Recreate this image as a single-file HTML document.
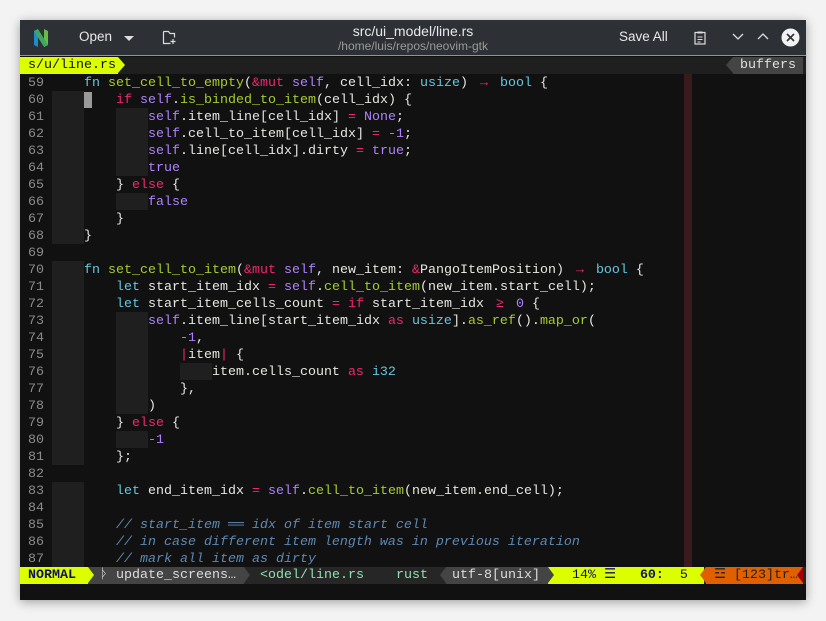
<!DOCTYPE html>
<html><head><meta charset="utf-8"><style>
*{margin:0;padding:0;box-sizing:border-box}
body{width:826px;height:621px;background:#f3f3f3;position:relative;overflow:hidden;font-family:"Liberation Sans","DejaVu Sans",sans-serif}
#win{position:absolute;left:20px;top:20px;width:786px;height:580px;background:#111;box-shadow:0 2px 10px rgba(0,0,0,.35)}
#tb{position:absolute;left:0;top:0;width:786px;height:36px;background:#2d3035;border-bottom:1px solid #3daee9;color:#e8e8e8;font-size:13.5px}
.abs{position:absolute;white-space:pre}
.m{font-family:"Liberation Mono","DejaVu Sans Mono",monospace;font-size:13.33px;line-height:17px}
.ln{position:absolute;left:32px;height:17px;color:#e6e6e2;white-space:pre;padding-top:1px}
.num{position:absolute;left:8px;width:16px;text-align:right;color:#8b8b8b;height:17px;padding-top:1px}
.k{color:#67c5dc}.f{color:#a6cc2c}.p{color:#f0286e}.s{color:#ae81ff}.c{color:#5f88b3;font-style:italic}
.lig{display:inline-block;width:16px;text-align:center}
.g{position:absolute;background:#1f1f1f;height:17px}
</style></head><body>
<div id="win">
<div id="tb">
 <svg class="abs" style="left:13px;top:8px" width="16" height="20" viewBox="0 0 16 20"><path d="M1 3 L5 1 L5 19 L1 17Z" fill="#1d8cc9"/><path d="M11 1 L15 3 L15 17 L11 19Z" fill="#6ab94a"/><path d="M5 1 L15 17 L11 19 L1 3Z" fill="#3fa860"/></svg>
 <div class="abs" style="left:59px;top:9px">Open</div>
 <div class="abs" style="left:104px;top:16px;width:0;height:0;border-left:5px solid transparent;border-right:5px solid transparent;border-top:5px solid #ddd"></div>
 <svg class="abs" style="left:142px;top:10px" width="14" height="15" viewBox="0 0 14 15"><path d="M1.5 1.5h5l1.5 2h4.5v4M1.5 1.5v12h7" fill="none" stroke="#ddd" stroke-width="1.2"/><path d="M11 9v5M8.5 11.5h5" stroke="#ddd" stroke-width="1.2"/></svg>
 <div class="abs" style="left:0;width:786px;text-align:center;top:3px;font-size:14px">src/ui_model/line.rs</div>
 <div class="abs" style="left:0;width:786px;text-align:center;top:19px;font-size:12px;color:#9a9a9a">/home/luis/repos/neovim-gtk</div>
 <div class="abs" style="left:599px;top:9px">Save All</div>
 <svg class="abs" style="left:674px;top:11px" width="12" height="14" viewBox="0 0 12 14"><rect x="1" y="1.5" width="10" height="11.5" fill="none" stroke="#ddd" stroke-width="1.2"/><rect x="3.5" y="0.5" width="5" height="2" fill="#ddd"/><path d="M3.5 6h5M3.5 8.5h5M3.5 11h3" stroke="#ddd"/></svg>
 <svg class="abs" style="left:712px;top:13px" width="12" height="8"><path d="M1 1l5 5 5-5" fill="none" stroke="#ddd" stroke-width="1.3"/></svg>
 <svg class="abs" style="left:737px;top:12px" width="12" height="8"><path d="M1 7l5-5 5 5" fill="none" stroke="#ddd" stroke-width="1.3"/></svg>
 <svg class="abs" style="left:761px;top:8px" width="19" height="19"><circle cx="9.5" cy="9.5" r="9" fill="#f2f2f2"/><path d="M6 6l7 7M13 6l-7 7" stroke="#2d3035" stroke-width="1.6"/></svg>
</div>
<div class="abs" style="left:0;top:37px;width:786px;height:17px;background:#1f1f1f"></div>
<div class="abs m" style="left:0;top:37px;width:98px;height:17px;background:#dcff00;color:#111;padding-left:8px">s/u/line.rs</div>
<div class="abs" style="left:98px;top:37px;width:0;height:0;border-top:8.5px solid transparent;border-bottom:8.5px solid transparent;border-left:7px solid #dcff00"></div>
<div class="abs" style="left:706px;top:37px;width:0;height:0;border-top:8.5px solid transparent;border-bottom:8.5px solid transparent;border-right:7px solid #444"></div>
<div class="abs m" style="left:713px;top:37px;width:70px;height:17px;background:#444;color:#e0e0e0;padding-left:7px">buffers</div>
<div class="abs" style="left:664px;top:54px;width:8px;height:493px;background:#3a1a1c"></div>
<div class="m" style="position:absolute;left:0;top:54px;width:786px;height:493px">
<div class="g" style="left:32px;top:17px;height:153px;width:32px"></div>
<div class="g" style="left:96px;top:34px;height:68px;width:32px"></div>
<div class="g" style="left:96px;top:119px;width:32px"></div>
<div class="g" style="left:32px;top:187px;height:204px;width:32px"></div>
<div class="g" style="left:96px;top:238px;height:102px;width:32px"></div>
<div class="g" style="left:96px;top:357px;width:32px"></div>
<div class="g" style="left:160px;top:289px;width:32px"></div>
<div class="g" style="left:32px;top:408px;height:85px;width:32px"></div>
<div class="abs" style="left:64px;top:18px;width:8px;height:16px;background:#9a9a9a"></div>
<div class="num" style="top:0">59</div><div class="ln" style="top:0">    <span class="k">fn</span> <span class="f">set_cell_to_empty</span>(<span class="p">&amp;mut</span> <span class="s">self</span>, cell_idx: <span class="k">usize</span>) <span class="p lig">→</span> <span class="k">bool</span> {</div>
<div class="num" style="top:17px">60</div><div class="ln" style="top:17px">        <span class="p">if</span> <span class="s">self</span>.<span class="f">is_binded_to_item</span>(cell_idx) {</div>
<div class="num" style="top:34px">61</div><div class="ln" style="top:34px">            <span class="s">self</span>.item_line[cell_idx] <span class="p">=</span> <span class="s">None</span>;</div>
<div class="num" style="top:51px">62</div><div class="ln" style="top:51px">            <span class="s">self</span>.cell_to_item[cell_idx] <span class="p">=</span> <span class="s">-1</span>;</div>
<div class="num" style="top:68px">63</div><div class="ln" style="top:68px">            <span class="s">self</span>.line[cell_idx].dirty <span class="p">=</span> <span class="s">true</span>;</div>
<div class="num" style="top:85px">64</div><div class="ln" style="top:85px">            <span class="s">true</span></div>
<div class="num" style="top:102px">65</div><div class="ln" style="top:102px">        } <span class="p">else</span> {</div>
<div class="num" style="top:119px">66</div><div class="ln" style="top:119px">            <span class="s">false</span></div>
<div class="num" style="top:136px">67</div><div class="ln" style="top:136px">        }</div>
<div class="num" style="top:153px">68</div><div class="ln" style="top:153px">    }</div>
<div class="num" style="top:170px">69</div>
<div class="num" style="top:187px">70</div><div class="ln" style="top:187px">    <span class="k">fn</span> <span class="f">set_cell_to_item</span>(<span class="p">&amp;mut</span> <span class="s">self</span>, new_item: <span class="p">&amp;</span>PangoItemPosition) <span class="p lig">→</span> <span class="k">bool</span> {</div>
<div class="num" style="top:204px">71</div><div class="ln" style="top:204px">        <span class="k">let</span> start_item_idx <span class="p">=</span> <span class="s">self</span>.<span class="f">cell_to_item</span>(new_item.start_cell);</div>
<div class="num" style="top:221px">72</div><div class="ln" style="top:221px">        <span class="k">let</span> start_item_cells_count <span class="p">=</span> <span class="p">if</span> start_item_idx <span class="p lig">≥</span> <span class="s">0</span> {</div>
<div class="num" style="top:238px">73</div><div class="ln" style="top:238px">            <span class="s">self</span>.item_line[start_item_idx <span class="p">as</span> <span class="k">usize</span>].<span class="f">as_ref</span>().<span class="f">map_or</span>(</div>
<div class="num" style="top:255px">74</div><div class="ln" style="top:255px">                <span class="s">-1</span>,</div>
<div class="num" style="top:272px">75</div><div class="ln" style="top:272px">                <span class="p">|</span>item<span class="p">|</span> {</div>
<div class="num" style="top:289px">76</div><div class="ln" style="top:289px">                    item.cells_count <span class="p">as</span> <span class="k">i32</span></div>
<div class="num" style="top:306px">77</div><div class="ln" style="top:306px">                },</div>
<div class="num" style="top:323px">78</div><div class="ln" style="top:323px">            )</div>
<div class="num" style="top:340px">79</div><div class="ln" style="top:340px">        } <span class="p">else</span> {</div>
<div class="num" style="top:357px">80</div><div class="ln" style="top:357px">            <span class="s">-1</span></div>
<div class="num" style="top:374px">81</div><div class="ln" style="top:374px">        };</div>
<div class="num" style="top:391px">82</div>
<div class="num" style="top:408px">83</div><div class="ln" style="top:408px">        <span class="k">let</span> end_item_idx <span class="p">=</span> <span class="s">self</span>.<span class="f">cell_to_item</span>(new_item.end_cell);</div>
<div class="num" style="top:425px">84</div>
<div class="num" style="top:442px">85</div><div class="ln c" style="top:442px">        // start_item <span class="lig">══</span> idx of item start cell</div>
<div class="num" style="top:459px">86</div><div class="ln c" style="top:459px">        // in case different item length was in previous iteration</div>
<div class="num" style="top:476px">87</div><div class="ln c" style="top:476px">        // mark all item as dirty</div>
</div>
<div class="m" style="position:absolute;left:0;top:547px;width:786px;height:17px;background:#262626">
 <div class="abs" style="left:0;top:0;width:68px;height:17px;background:#dcff00;color:#10106a;font-weight:bold;padding-left:8px">NORMAL</div>
 <div class="abs" style="left:68px;top:0;width:156px;height:17px;background:#444;color:#ddd;padding-left:12px">ᚦ update_screens…</div>
 <div class="abs" style="left:68px;top:0;width:0;height:0;border-top:8.5px solid transparent;border-bottom:8.5px solid transparent;border-left:6px solid #dcff00"></div>
 <div class="abs" style="left:224px;top:0;width:0;height:0;border-top:8.5px solid transparent;border-bottom:8.5px solid transparent;border-left:6px solid #444"></div>
 <div class="abs" style="left:240px;top:0;color:#8fe0b0">&lt;odel/line.rs    rust</div>
 <div class="abs" style="left:420px;top:0;width:0;height:0;border-top:8.5px solid transparent;border-bottom:8.5px solid transparent;border-right:6px solid #444"></div>
 <div class="abs" style="left:426px;top:0;width:102px;height:17px;background:#444;color:#ddd;padding-left:6px">utf-8[unix]</div>
 <div class="abs" style="left:528px;top:0;width:156px;height:17px;background:#dcff00;color:#10106a;padding-left:24px">14% ☰   <b>60:</b>  5</div>
 <div class="abs" style="left:528px;top:0;width:0;height:0;border-top:8.5px solid transparent;border-bottom:8.5px solid transparent;border-left:6px solid #444"></div>
 <div class="abs" style="left:686px;top:0;width:97px;height:17px;background:#e06000;color:#222;padding-left:8px">☲ [123]tr…</div>
 <div class="abs" style="left:680px;top:0;width:0;height:0;border-top:8.5px solid transparent;border-bottom:8.5px solid transparent;border-right:6px solid #e06000"></div>
 <div class="abs" style="left:777px;top:0;width:0;height:0;border-top:8.5px solid transparent;border-bottom:8.5px solid transparent;border-right:6px solid #a00000"></div>
</div>
</div>
</body></html>
